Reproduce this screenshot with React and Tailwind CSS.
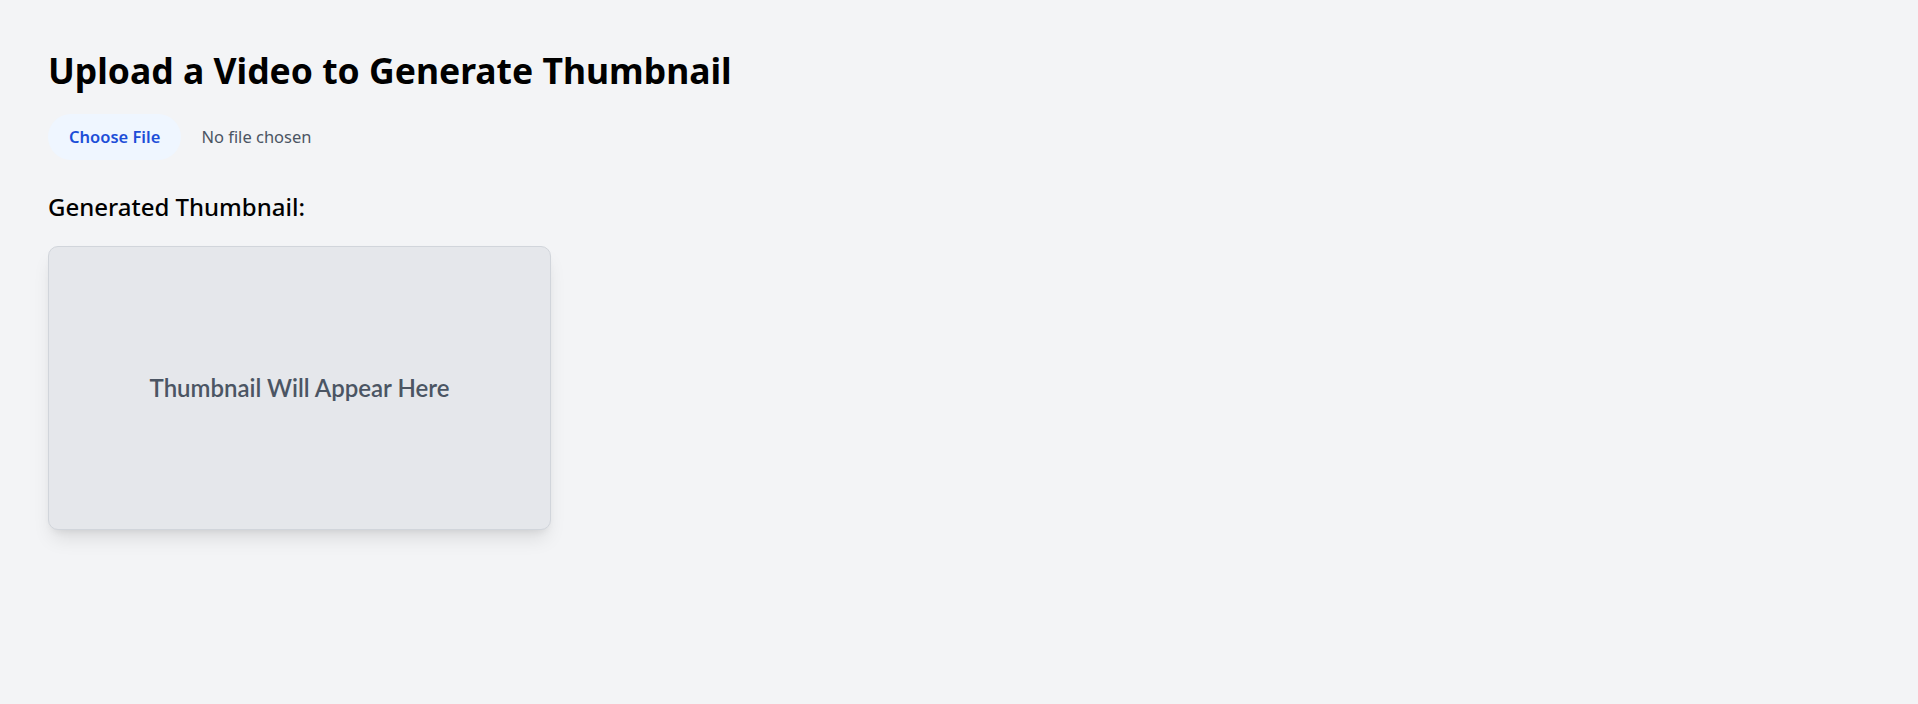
export default function App() {
  return (
    <div className="min-h-screen w-full bg-[#f3f4f6] pl-[48px] pt-[48px] font-['Noto_Sans',sans-serif]">
      <h1 className="text-[35.5px] leading-[45px] font-bold text-black">
        Upload a Video to Generate Thumbnail
      </h1>
      <div className="mt-[21px] flex items-center">
        <span className="flex h-[46px] items-center rounded-full bg-[#eff6ff] px-[21px] text-[16.5px] font-semibold text-[#1d4ed8]">
          Choose File
        </span>
        <span className="ml-[20px] text-[16.5px] text-[#4b5563]">No file chosen</span>
      </div>
      <h2 className="mt-[29px] text-[24px] leading-[35px] font-medium text-black">
        Generated Thumbnail:
      </h2>
      <div className="mt-[22px] flex h-[284px] w-[503px] items-center justify-center rounded-[10px] border border-[#d1d5db] bg-[#e5e7eb] shadow-[0_12px_19px_-4px_rgba(0,0,0,0.1),0_5px_8px_-5px_rgba(0,0,0,0.1)]">
        <span className="font-['Lato',sans-serif] text-[24px] font-semibold text-[#4b5563]">
          Thumbnail Will Appear Here
        </span>
      </div>
    </div>
  );
}
